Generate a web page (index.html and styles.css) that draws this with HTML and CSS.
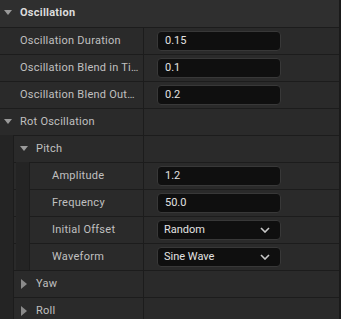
FILE: index.html
```html
<!DOCTYPE html>
<html>
  <head>
    <title>Details</title>
    <link rel="stylesheet" href="styles.css">
  </head>
  <body>
    <div class="panel">
      <div class="row header">
        <span class="arrow open"></span>
        <span class="label">Oscillation</span>
      </div>

      <div class="row">
        <div class="name"><span class="arrow"></span><span class="label">Oscillation Duration</span></div>
        <div class="value"><div class="field">0.15</div></div>
      </div>
      <div class="row">
        <div class="name"><span class="arrow"></span><span class="label" title="Oscillation Blend in Time">Oscillation Blend in Ti…</span></div>
        <div class="value"><div class="field">0.1</div></div>
      </div>
      <div class="row">
        <div class="name"><span class="arrow"></span><span class="label" title="Oscillation Blend Out Time">Oscillation Blend Out…</span></div>
        <div class="value"><div class="field">0.2</div></div>
      </div>

      <div class="row">
        <div class="name"><span class="arrow open"></span><span class="label">Rot Oscillation</span></div>
        <div class="value"></div>
      </div>
      <div class="row">
        <div class="name"><span class="indent"></span><span class="arrow open"></span><span class="label">Pitch</span></div>
        <div class="value"></div>
      </div>
      <div class="row">
        <div class="name"><span class="indent"></span><span class="indent"></span><span class="arrow"></span><span class="label">Amplitude</span></div>
        <div class="value"><div class="field">1.2</div></div>
      </div>
      <div class="row">
        <div class="name"><span class="indent"></span><span class="indent"></span><span class="arrow"></span><span class="label">Frequency</span></div>
        <div class="value"><div class="field">50.0</div></div>
      </div>
      <div class="row">
        <div class="name"><span class="indent"></span><span class="indent"></span><span class="arrow"></span><span class="label">Initial Offset</span></div>
        <div class="value">
          <div class="field combo">Random
            <svg class="chevron" width="10" height="6" viewBox="0 0 10 6"><path d="M1 1 L5 5 L9 1" fill="none" stroke="#c8c8c8" stroke-width="1.6"/></svg>
          </div>
        </div>
      </div>
      <div class="row">
        <div class="name"><span class="indent"></span><span class="indent"></span><span class="arrow"></span><span class="label">Waveform</span></div>
        <div class="value">
          <div class="field combo">Sine Wave
            <svg class="chevron" width="10" height="6" viewBox="0 0 10 6"><path d="M1 1 L5 5 L9 1" fill="none" stroke="#c8c8c8" stroke-width="1.6"/></svg>
          </div>
        </div>
      </div>
      <div class="row">
        <div class="name"><span class="indent"></span><span class="arrow closed"></span><span class="label">Yaw</span></div>
        <div class="value"></div>
      </div>
      <div class="row">
        <div class="name"><span class="indent"></span><span class="arrow closed"></span><span class="label">Roll</span></div>
        <div class="value"></div>
      </div>
    </div>
  </body>
</html>
```

FILE: styles.css
```css
html,
body {
  margin: 0;
  height: 100%;
  background-color: #1a1a1a;
}
body {
  font-family: Roboto, "Liberation Sans", sans-serif;
  font-size: 11px;
  color: #c0c0c0;
}
.panel {
  width: 340px;
  border-right: 1px solid #1a1a1a;
  box-sizing: border-box;
  background-color: #2a2a2a;
  overflow: hidden;
}
.row {
  display: flex;
  align-items: stretch;
  height: 27px;
  border-bottom: 1px solid #1c1c1c;
  box-sizing: border-box;
  padding-bottom: 1px;
}
.header {
  height: 28px;
  align-items: center;
  padding-bottom: 2px;
  background-color: #2f2f2f;
}
.header .label {
  font-weight: bold;
  color: #dcdcdc;
}
.name {
  display: flex;
  align-items: center;
  width: 144px;
  flex-shrink: 0;
  border-right: 1px solid #1c1c1c;
  box-sizing: border-box;
  margin-bottom: -1px;
  padding-bottom: 1px;
  min-width: 0;
}
.label {
  white-space: nowrap;
  letter-spacing: 0.25px;
}
.indent {
  align-self: stretch;
  width: 13px;
  flex-shrink: 0;
  margin: -1px 2px -1px 0;
  background-color: #242424;
  border-right: 1px solid #1c1c1c;
}
.arrow {
  width: 20px;
  flex-shrink: 0;
  height: 10px;
  position: relative;
}
.arrow.open::before {
  content: "";
  position: absolute;
  left: 4px;
  top: 2px;
  border-left: 4.5px solid transparent;
  border-right: 4.5px solid transparent;
  border-top: 5px solid #9a9a9a;
}
.arrow.closed::before {
  content: "";
  position: absolute;
  left: 5px;
  top: 0;
  border-top: 5px solid transparent;
  border-bottom: 5px solid transparent;
  border-left: 6px solid #8a8a8a;
}
.value {
  flex: 1;
  display: flex;
  align-items: center;
  padding-left: 13px;
}
.field {
  display: flex;
  align-items: center;
  justify-content: space-between;
  width: 124px;
  height: 20px;
  box-sizing: border-box;
  padding: 0 10px 0 7px;
  background-color: #0f0f0f;
  border: 1px solid #383838;
  border-radius: 4px;
  color: #e2e2e2;
}
.combo {
  padding-left: 6px;
}
.chevron {
  display: block;
}
```
